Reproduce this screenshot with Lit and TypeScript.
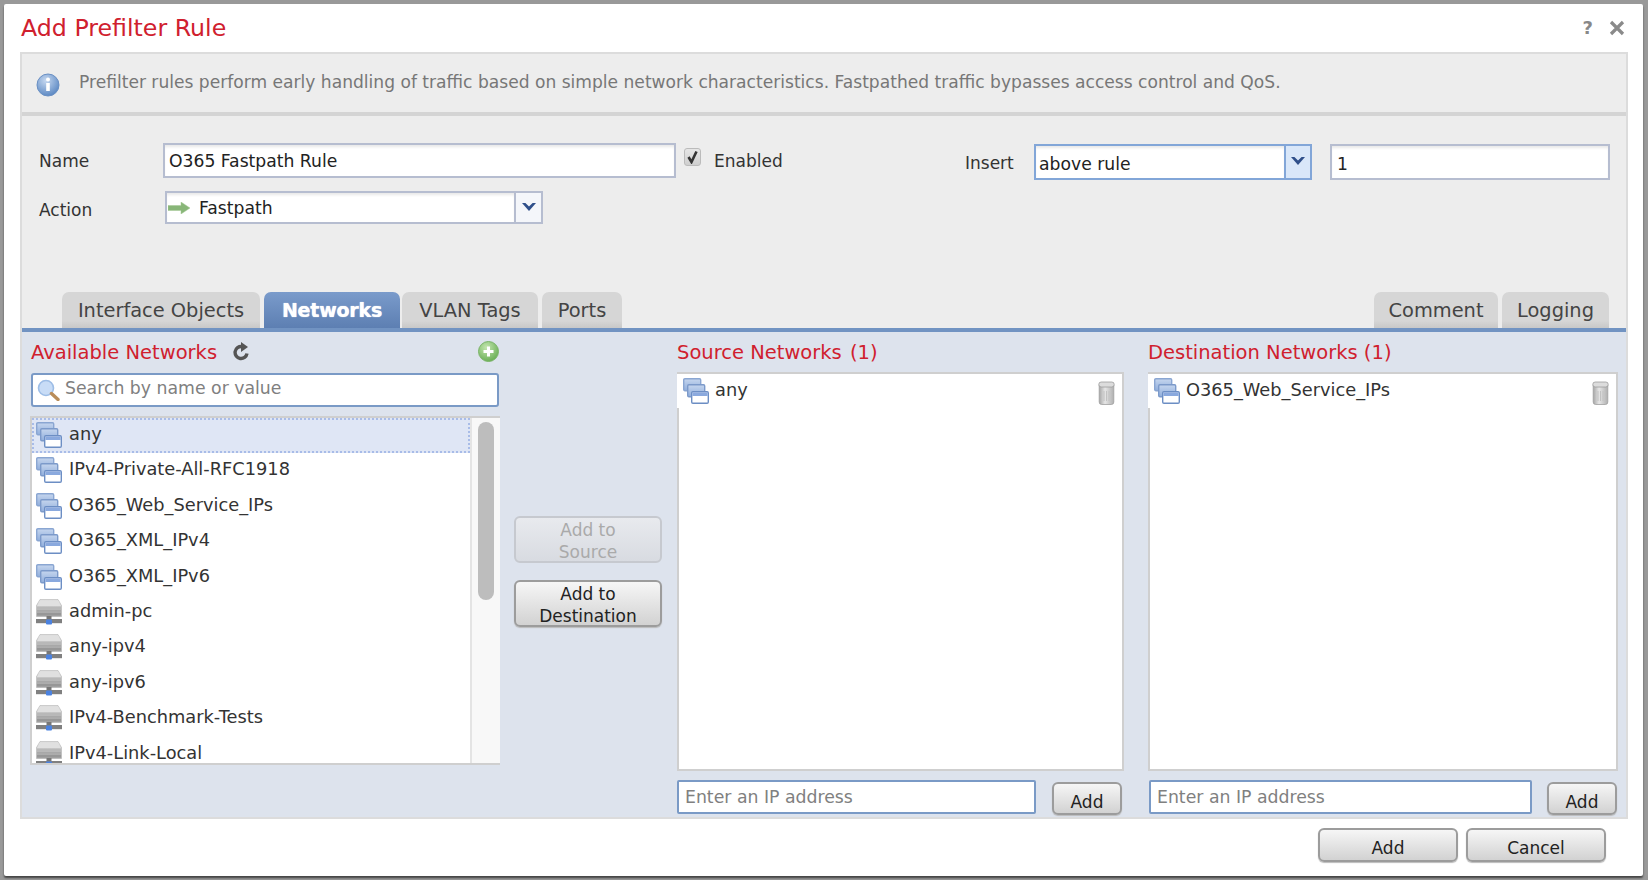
import { LitElement, html, css } from "lit";
import { customElement } from "lit/decorators.js";

const netIcon = html`<svg class="ico" width="26" height="26" viewBox="0 0 26 26">
  <defs><linearGradient id="nb" x1="0" y1="0" x2="0" y2="1"><stop offset="0" stop-color="#c6d6ee"/><stop offset="1" stop-color="#90aedc"/></linearGradient></defs>
  <rect x="0.7" y="0.7" width="17" height="12" rx="1.2" fill="url(#nb)" stroke="#8aa6d2" stroke-width="1.4"/>
  <rect x="4.7" y="6.7" width="17" height="12" rx="1.2" fill="url(#nb)" stroke="#7c9aca" stroke-width="1.4"/>
  <rect x="8.7" y="13.7" width="16.6" height="11.6" rx="1.2" fill="#fff" stroke="#6c8ec4" stroke-width="1.4"/>
  <rect x="9.4" y="14.4" width="15.2" height="3.6" fill="#8aa9de"/>
</svg>`;

const hostIcon = html`<svg class="ico" width="26" height="26" viewBox="0 0 26 26">
  <defs><linearGradient id="hb" x1="0" y1="0" x2="0" y2="1"><stop offset="0" stop-color="#e2e2e2"/><stop offset="1" stop-color="#9c9c9c"/></linearGradient></defs>
  <path d="M4 0.5h18l3.5 6v11H0.5v-11z" fill="url(#hb)" stroke="#b4b4b4" stroke-width="0.6"/>
  <path d="M3.5 2h19l2.5 5H1z" fill="#e0e0e0"/>
  <rect x="1" y="8" width="24" height="2" fill="#b8b8b8"/>
  <rect x="1" y="11" width="24" height="1.6" fill="#a8a8a8"/>
  <rect x="1" y="14" width="24" height="2" fill="#979797"/>
  <rect x="10.5" y="17" width="5" height="4" fill="#777"/>
  <rect x="0" y="20" width="26" height="4.2" fill="#808080"/>
  <rect x="10" y="20.5" width="6" height="5" rx="1" fill="#4b82e0"/>
</svg>`;

const trash = html`<svg class="trash" width="17" height="24" viewBox="0 0 17 24">
  <defs><linearGradient id="tb" x1="0" y1="0" x2="1" y2="0"><stop offset="0" stop-color="#a6a6a6"/><stop offset="0.4" stop-color="#e6e6e6"/><stop offset="1" stop-color="#b0b0b0"/></linearGradient></defs>
  <path d="M1.2 4h14.6v17q0 2.5-2.5 2.5H3.7q-2.5 0-2.5-2.5z" fill="url(#tb)" stroke="#a0a0a0" stroke-width="0.8"/>
  <rect x="0.8" y="1" width="15.4" height="5" rx="2.4" fill="#dcdcdc" stroke="#9c9c9c" stroke-width="0.8"/>
  <path d="M6 10v10M8.5 10v10M11 10v10" stroke="#c2c2c2" stroke-width="1"/>
</svg>`;

const chevron = html`<svg width="14" height="8" viewBox="0 0 14 8"><path d="M0 0h3.4L7 3.6 10.6 0H14L7 8z" fill="#2f4f8a"/></svg>`;

const availableNets = ["any", "IPv4-Private-All-RFC1918", "O365_Web_Service_IPs", "O365_XML_IPv4", "O365_XML_IPv6"];
const availableHosts = ["admin-pc", "any-ipv4", "any-ipv6", "IPv4-Benchmark-Tests", "IPv4-Link-Local"];

@customElement("app-root")
export class AppRoot extends LitElement {
  static styles = css`
    :host { display: block; width: 1648px; height: 880px; box-sizing: border-box; padding: 4px 5px 4px 4px; background: #999; font-family: "DejaVu Sans", sans-serif; color: #333; overflow: hidden; }
    .dialog { height: 872px; background: #fff; border-radius: 2px; box-shadow: 0 2px 2px #444; padding: 0 15px 0 16px; box-sizing: border-box; display: flex; flex-direction: column; }
    .head { height: 48px; flex: none; display: flex; align-items: center; }
    .title { font-size: 23.7px; color: #d0202e; margin-left: 1px; }
    .head-tools { margin-left: auto; display: flex; align-items: center; gap: 16px; padding-right: 3px; color: #888; }
    .q { font-size: 18px; font-weight: bold; line-height: 18px; }
    .content { flex: none; height: 767px; box-sizing: border-box; border: 2px solid #dcdcdc; background: #ededed; display: flex; flex-direction: column; }
    .info { height: 58px; flex: none; box-sizing: border-box; display: flex; align-items: center; padding-left: 14px; gap: 19px; color: #777; font-size: 17.1px; }
    .info svg { flex: none; margin-top: 4px; }
    .info span { margin-top: -2px; white-space: nowrap; }
    .sep { height: 4px; background: #d4d4d4; flex: none; }
    .form { height: 176px; flex: none; box-sizing: border-box; padding: 27px 16px 0 17px; }
    .row { display: flex; align-items: flex-start; font-size: 17px; }
    .row1 { height: 36px; }
    .row + .row { margin-top: 12px; }
    .lbl { line-height: 36px; color: #333; width: 124px; flex: none; }
    .row2 .lbl { width: 126px; line-height: 38px; }
    .field { box-sizing: border-box; height: 36px; border: 2px solid #b6bdd0; background: #fff; box-shadow: inset 0 3px 3px -1px #e8e8e8; color: #222; padding-left: 4px; line-height: 32px; font-size: 17.2px; white-space: nowrap; }
    .name { width: 513px; height: 35px; }
    .cb { width: 17px; height: 18px; box-sizing: border-box; margin: 5px 0 0 8px; border: 1px solid #bbb; border-radius: 3px; background: linear-gradient(#e6e6e6, #cfcfcf); display: flex; align-items: center; justify-content: center; flex: none; }
    .en { margin-left: 13px; line-height: 37px; }
    .ins { margin-left: auto; margin-top: 1px; display: flex; }
    .ins .lbl { width: 69px; line-height: 38px; }
    .sel { display: flex; box-sizing: border-box; border: 2px solid #b6bdd0; background: #fff; font-size: 17.2px; color: #222; }
    .sel .txt { flex: 1; display: flex; align-items: center; box-shadow: inset 0 3px 3px -1px #e8e8e8; }
    .sel .btn { flex: none; display: flex; align-items: flex-start; justify-content: center; border-left: 2px solid #b6bdd0; background: #f4f6fa; box-sizing: border-box; }
    .insert { width: 278px; height: 36px; border-color: #82a6d8; }
    .insert .txt { padding: 3px 0 0 3px; }
    .insert .btn { width: 26px; background: #d9e7f9; border-color: #82a6d8; padding-top: 11px; }
    .num { width: 280px; margin-left: 18px; padding-left: 5px; line-height: 37px; }
    .action { width: 378px; height: 33px; }
    .action .txt { padding: 1px 0 0 1px; gap: 9px; }
    .action .btn { width: 27px; padding-top: 10px; }
    .tabs { height: 36px; flex: none; display: flex; padding: 0 17px 0 40px; font-size: 19.4px; }
    .tab { box-sizing: border-box; height: 36px; border-radius: 7px 7px 0 0; background: linear-gradient(#d6d6d6 80%, #c8c8c8); color: #444; display: flex; align-items: center; justify-content: center; }
    .t1 { width: 198px; margin-right: 4px; }
    .t2 { width: 136px; margin-right: 2px; background: linear-gradient(#7a9bcb, #5d7fb2); color: #fff; font-weight: bold; font-size: 19px; letter-spacing: -0.2px; text-shadow: 0 0 1px #fff; }
    .t3 { width: 136px; margin-right: 4px; }
    .t4 { width: 80px; }
    .t5 { width: 124px; margin-left: auto; margin-right: 4px; }
    .t6 { width: 107px; }
    .bar { height: 4px; background: #7193c2; flex: none; }
    .panel { flex: 1; background: #dde3ed; display: flex; padding: 10px 8px 0 8px; min-height: 0; }
    .col1 { width: 470px; flex: none; }
    .col2 { width: 148px; flex: none; margin: 0 15px 0 14px; padding-top: 174px; display: flex; flex-direction: column; gap: 17px; }
    .col3 { width: 447px; flex: none; margin-right: 24px; }
    .col4 { width: 470px; flex: none; }
    .ptitle { height: 22px; line-height: 22px; color: #d0202e; font-size: 19.5px; display: flex; align-items: center; white-space: pre; }
    .col1 .ptitle { padding-left: 1px; }
    .cnt { margin-left: 2px; }
    .refresh { margin: -4px 0 0 16px; }
    .plus { margin: -4px 1px 0 auto; }
    .search { box-sizing: border-box; height: 34px; margin: 9px 0 9px 1px; width: 468px; background: #fff; border: 2px solid #7a9ac6; border-radius: 3px; display: flex; align-items: center; padding: 0 0 4px 4px; gap: 5px; color: #808080; font-size: 17.3px; }
    .search svg { flex: none; margin-top: 4px; }
    .list { box-sizing: border-box; height: 349px; border: 2px solid #cfcfcf; border-right: 0; background: #fff; display: flex; overflow: hidden; }
    .rows { flex: 1; min-width: 0; }
    .track { width: 30px; flex: none; box-sizing: border-box; background: #f8f8f8; border-left: 2px solid #e4e4e4; padding: 4px 0 0 6px; }
    .thumb { width: 16px; height: 178px; border-radius: 8px; background: #bdbdbd; }
    .item { height: 35.4px; box-sizing: border-box; display: flex; align-items: flex-start; padding: 4px 0 0 4px; gap: 7px; font-size: 17.8px; line-height: 24px; color: #333; }
    .item.sel-row { background: #dfe6f5; outline: 2px dotted #a8bce8; outline-offset: -2px; }
    .ico { flex: none; }
    .dst { box-sizing: border-box; height: 399px; margin-top: 8px; border: 2px solid #cfcfcf; background: #fff; }
    .dst-row { height: 34px; margin-left: -2px; padding: 4px 3px 0 6px; background: #fff; display: flex; gap: 6px; font-size: 17.8px; line-height: 24px; box-sizing: border-box; color: #333; width: calc(100% + 2px); }
    .trash { margin: 3px 4px 0 auto; flex: none; }
    .addrow { display: flex; justify-content: space-between; align-items: flex-start; margin-top: 9px; }
    .ip { box-sizing: border-box; height: 34px; background: #fff; border: 2px solid #7a9ac6; border-radius: 2px; color: #808080; font-size: 17.3px; padding-left: 6px; line-height: 31px; white-space: nowrap; }
    .col3 .ip { width: 359px; }
    .col4 .ip { width: 383px; margin-left: 1px; }
    .b { box-sizing: border-box; border: 2px solid #9c9c9c; border-radius: 6px; background: linear-gradient(#f6f6f6, #d2d2d2); color: #222; font-size: 17px; display: flex; align-items: center; justify-content: center; text-align: center; box-shadow: 0 1px 1px #bbb; }
    .small { width: 70px; height: 33px; margin-top: 2px; padding-top: 6px; }
    .col3 .small { margin-right: 2px; }
    .col4 .small { margin-right: 1px; }
    .mid { height: 47px; line-height: 22px; padding: 3px 10px 0; }
    .mid.off { color: #aaa; border-color: #c6c9cf; background: linear-gradient(#e8eaee, #d8dbe1); box-shadow: none; }
    .foot { flex: 1; display: flex; justify-content: flex-end; gap: 8px; padding: 9px 22px 0 0; align-items: flex-start; }
    .big { width: 140px; height: 34px; padding-top: 6px; }
  `;

  render() {
    return html`
      <div class="dialog">
        <div class="head">
          <div class="title">Add Prefilter Rule</div>
          <div class="head-tools">
            <span class="q">?</span>
            <svg width="16" height="16" viewBox="0 0 16 16"><path d="M2 2 14 14M14 2 2 14" stroke="#8a8a8a" stroke-width="3.2"/></svg>
          </div>
        </div>
        <div class="content">
          <div class="info">
            <svg width="24" height="26" viewBox="0 0 24 26">
              <defs><radialGradient id="ib" cx="0.4" cy="0.3" r="0.8"><stop offset="0" stop-color="#c6d8f0"/><stop offset="1" stop-color="#4f7fbe"/></radialGradient></defs>
              <circle cx="12" cy="13" r="11" fill="url(#ib)" stroke="#6a90c4"/>
              <rect x="10.2" y="11" width="3.6" height="8" fill="#fff"/>
              <circle cx="12" cy="7.6" r="2" fill="#fff"/>
            </svg>
            <span>Prefilter rules perform early handling of traffic based on simple network characteristics. Fastpathed traffic bypasses access control and QoS.</span>
          </div>
          <div class="sep"></div>
          <div class="form">
            <div class="row row1">
              <div class="lbl">Name</div>
              <div class="field name">O365 Fastpath Rule</div>
              <div class="cb"><svg width="13" height="14" viewBox="0 0 13 14"><path d="M2.5 7 5.5 12 10.5 1.5" fill="none" stroke="#333" stroke-width="2.6"/></svg></div>
              <div class="en">Enabled</div>
              <div class="ins">
                <div class="lbl">Insert</div>
                <div class="sel insert"><div class="txt">above rule</div><div class="btn">${chevron}</div></div>
                <div class="field num">1</div>
              </div>
            </div>
            <div class="row row2">
              <div class="lbl">Action</div>
              <div class="sel action">
                <div class="txt">
                  <svg width="22" height="12" viewBox="0 0 22 12"><path d="M0 3.5h13V0l9 6-9 6V8.5H0z" fill="#88b678" stroke="#a4c994" stroke-width="0.5"/></svg>
                  Fastpath
                </div>
                <div class="btn">${chevron}</div>
              </div>
            </div>
          </div>
          <div class="tabs">
            <div class="tab t1">Interface Objects</div>
            <div class="tab t2">Networks</div>
            <div class="tab t3">VLAN Tags</div>
            <div class="tab t4">Ports</div>
            <div class="tab t5">Comment</div>
            <div class="tab t6">Logging</div>
          </div>
          <div class="bar"></div>
          <div class="panel">
            <div class="col1">
              <div class="ptitle">
                <span>Available Networks</span>
                <svg class="refresh" width="17" height="19" viewBox="0 0 17 19"><path d="M14 11.5A6 6 0 1 1 9 4.6" fill="none" stroke="#555" stroke-width="3.4"/><path d="M8 0l7 5-7 5z" fill="#555"/></svg>
                <svg class="plus" width="21" height="21" viewBox="0 0 21 21">
                  <defs><radialGradient id="gb" cx="0.4" cy="0.3" r="0.8"><stop offset="0" stop-color="#c4e6b0"/><stop offset="1" stop-color="#5fa84a"/></radialGradient></defs>
                  <circle cx="10.5" cy="10.5" r="10" fill="url(#gb)" stroke="#7ab468"/>
                  <path d="M10.5 5.5v10M5.5 10.5h10" stroke="#fff" stroke-width="3"/>
                </svg>
              </div>
              <div class="search">
                <svg width="23" height="22" viewBox="0 0 23 22"><circle cx="9" cy="9" r="7.5" fill="#c8dcf6" stroke="#9dbde6" stroke-width="1.6"/><path d="M14.5 14.5 21 20.5" stroke="#b98d5a" stroke-width="3.4" stroke-linecap="round"/></svg>
                Search by name or value
              </div>
              <div class="list">
                <div class="rows">
                  ${availableNets.map((n, i) => html`<div class="item ${i === 0 ? "sel-row" : ""}">${netIcon}<span>${n}</span></div>`)}
                  ${availableHosts.map((n) => html`<div class="item">${hostIcon}<span>${n}</span></div>`)}
                </div>
                <div class="track"><div class="thumb"></div></div>
              </div>
            </div>
            <div class="col2">
              <div class="b mid off">Add to<br />Source</div>
              <div class="b mid">Add to<br />Destination</div>
            </div>
            <div class="col3">
              <div class="ptitle">Source Networks <span class="cnt">(1)</span></div>
              <div class="dst"><div class="dst-row">${netIcon}<span>any</span>${trash}</div></div>
              <div class="addrow"><div class="ip">Enter an IP address</div><div class="b small">Add</div></div>
            </div>
            <div class="col4">
              <div class="ptitle">Destination Networks (1)</div>
              <div class="dst"><div class="dst-row">${netIcon}<span>O365_Web_Service_IPs</span>${trash}</div></div>
              <div class="addrow"><div class="ip">Enter an IP address</div><div class="b small">Add</div></div>
            </div>
          </div>
        </div>
        <div class="foot">
          <div class="b big">Add</div>
          <div class="b big">Cancel</div>
        </div>
      </div>
    `;
  }
}
